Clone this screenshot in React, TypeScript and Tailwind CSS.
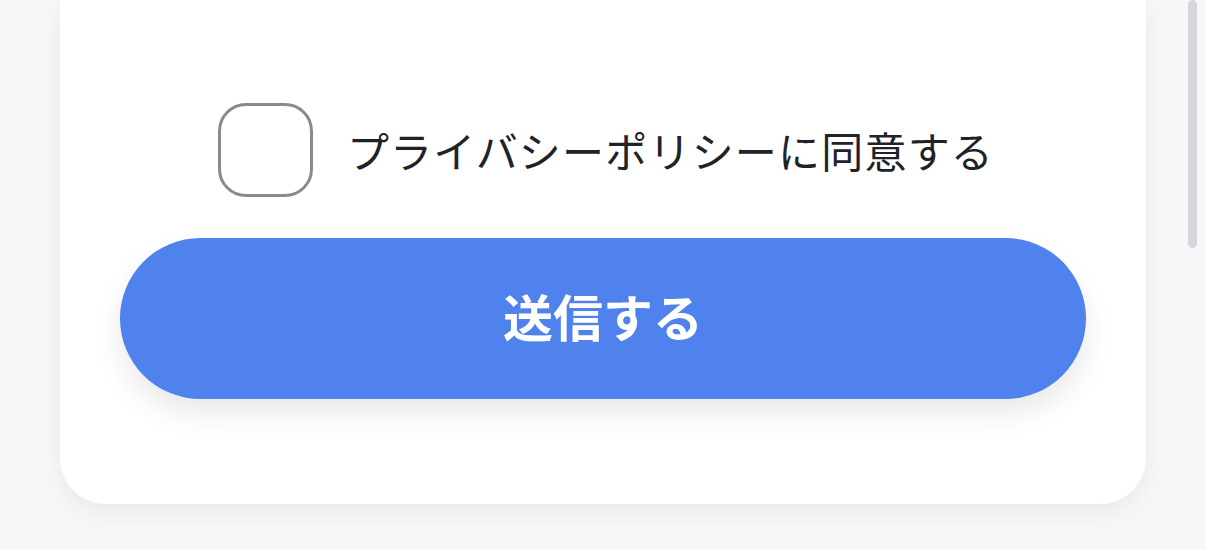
import React from "react";

export default function App() {
  return (
    <div
      className="relative w-[1206px] h-[550px] overflow-hidden bg-[#f6f7f9]"
      style={{ fontFamily: '"Noto Sans CJK JP", "Noto Sans", sans-serif' }}
    >
      <div className="mx-[60px] w-[1086px] rounded-b-[46px] bg-white shadow-[0_8px_24px_rgba(0,0,0,0.06)] pt-[103px] pb-[105px] px-[60px]">
        <label className="flex items-center justify-center gap-[34px] pl-[6px]">
          <span className="block w-[95px] h-[94px] shrink-0 rounded-[28px] border-[3px] border-[#8a8a8c] bg-white" />
          <span className="text-[42px] leading-none text-[#1f2329] tracking-[1.2px]">
            プライバシーポリシーに同意する
          </span>
        </label>
        <button className="mt-[41px] flex h-[161px] w-full items-center justify-center rounded-full bg-[#4f82ec] pb-[8px] text-[50px] leading-none font-bold text-white shadow-[0_14px_28px_rgba(0,0,0,0.09)]">
          送信する
        </button>
      </div>
      <div className="absolute right-[9px] top-0 h-[248px] w-[9px] rounded-full bg-[#d5d6d9]" />
    </div>
  );
}
